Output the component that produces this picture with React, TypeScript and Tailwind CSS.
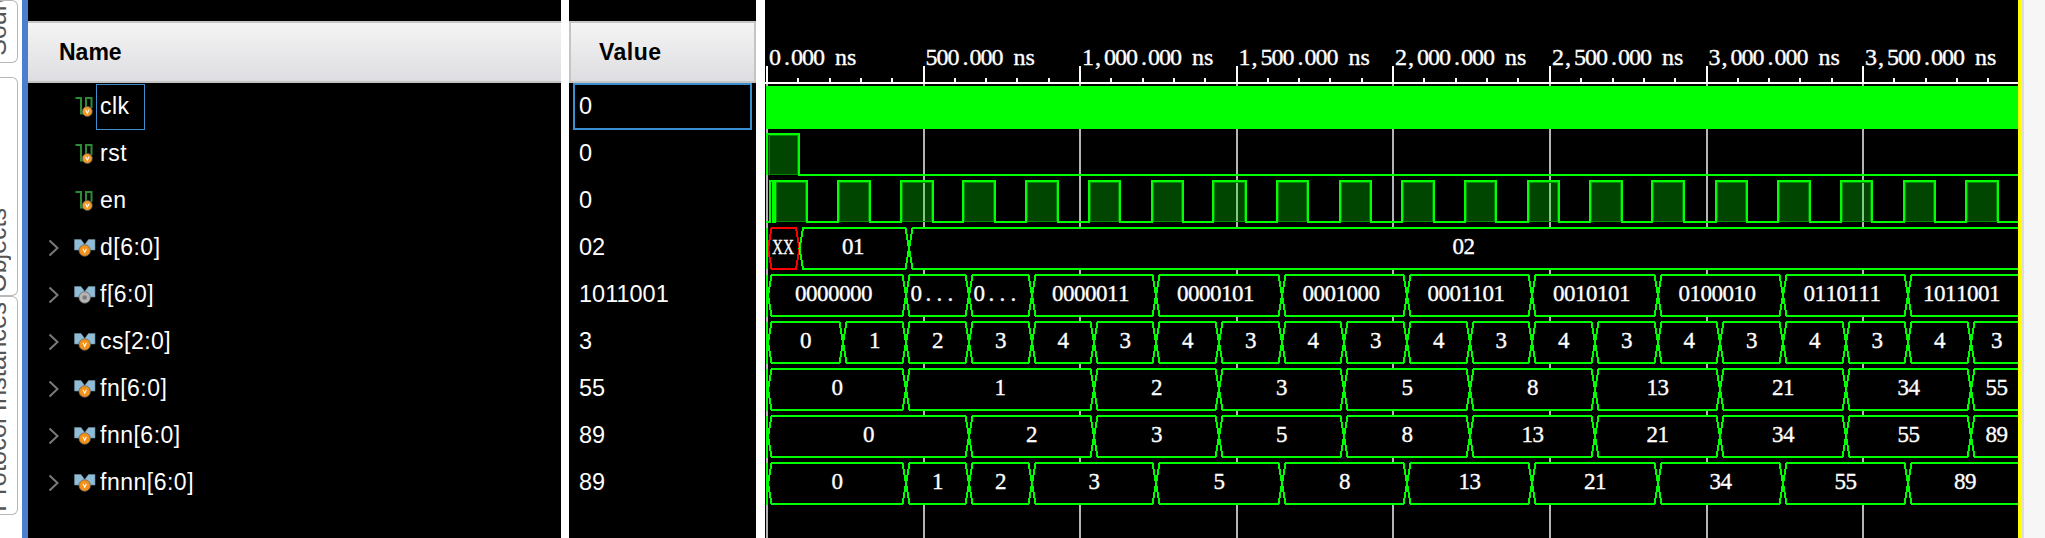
const TICKS = [767, 923.5, 1080, 1236.5, 1393, 1550, 1706.5, 1863];
const LABELS = ["0.000 ns", "500.000 ns", "1,000.000 ns", "1,500.000 ns", "2,000.000 ns", "2,500.000 ns", "3,000.000 ns", "3,500.000 ns"];
const PULSES: [number, number][] = [[775, 807], [838, 870], [901, 933], [963, 995], [1026, 1058], [1089, 1120], [1152, 1183], [1213, 1246], [1277, 1308], [1340, 1371], [1402, 1434], [1465, 1496], [1528, 1559], [1590, 1622], [1652, 1684], [1716, 1747], [1778, 1810], [1841, 1872], [1904, 1935], [1966, 1998]];
const END = 2022;
const BUSES: { top: number; cuts: number[]; vals: string[]; dx?: number }[] = [
  { top: 275, cuts: [768, 906, 969, 1032, 1156, 1282, 1407, 1532, 1658, 1783, 1908, END], vals: ["0000000", "0...", "0...", "0000011", "0000101", "0001000", "0001101", "0010101", "0100010", "0110111", "1011001"], dx: -3.5 },
  { top: 322, cuts: [768, 843, 906, 969, 1032, 1094, 1156, 1219, 1282, 1344, 1407, 1470, 1532, 1595, 1658, 1720, 1783, 1846, 1908, 1971, END], vals: ["0", "1", "2", "3", "4", "3", "4", "3", "4", "3", "4", "3", "4", "3", "4", "3", "4", "3", "4", "3"] },
  { top: 369, cuts: [768, 906, 1094, 1219, 1344, 1470, 1595, 1720, 1846, 1971, END], vals: ["0", "1", "2", "3", "5", "8", "13", "21", "34", "55"] },
  { top: 416, cuts: [768, 969, 1094, 1219, 1344, 1470, 1595, 1720, 1846, 1971, END], vals: ["0", "2", "3", "5", "8", "13", "21", "34", "55", "89"] },
  { top: 463, cuts: [768, 906, 969, 1032, 1156, 1282, 1407, 1532, 1658, 1783, 1908, END], vals: ["0", "1", "2", "3", "5", "8", "13", "21", "34", "55", "89"] },
];
const SIGNALS = [
  { name: "clk", value: "0", kind: "bit" },
  { name: "rst", value: "0", kind: "bit" },
  { name: "en", value: "0", kind: "bit" },
  { name: "d[6:0]", value: "02", kind: "vec" },
  { name: "f[6:0]", value: "1011001", kind: "vecGray" },
  { name: "cs[2:0]", value: "3", kind: "vec" },
  { name: "fn[6:0]", value: "55", kind: "vec" },
  { name: "fnn[6:0]", value: "89", kind: "vec" },
  { name: "fnnn[6:0]", value: "89", kind: "vec" },
];
const G = "#00ff00";

function Glyphs({ text, x, y, size = 23 }: { text: string; x: number; y: number; size?: number }) {
  const xs = text.split("").map((c, i) => x + i * 11 + (c === "." ? 4 : c === "," ? 2 : c === "s" ? 1 : 0));
  return (
    <text x={xs.join(" ")} y={y} fill="#fff" fontSize={size} fontFamily="'Liberation Serif', serif" stroke="#fff" strokeWidth="0.35" shapeRendering="auto">
      {text}
    </text>
  );
}

function Hex({ a, b, top, color = G }: { a: number; b: number; top: number; color?: string }) {
  const bot = top + 41;
  const mid = top + 20.5;
  return (
    <polygon
      points={`${a},${mid} ${a + 3.5},${top} ${b - 3.5},${top} ${b},${mid} ${b - 3.5},${bot} ${a + 3.5},${bot}`}
      fill="none"
      stroke={color}
      strokeWidth="2"
    />
  );
}

function Wave() {
  return (
    <svg width="1253" height="538" viewBox="765 0 1253 538" className="block shrink-0 bg-black" shapeRendering="crispEdges">
      {TICKS.map((x) => (
        <line key={x} x1={x} x2={x} y1="83" y2="538" stroke="#b4b4b4" strokeWidth="2" />
      ))}
      {TICKS.map((x) => (
        <g key={x}>
          <line x1={x} x2={x} y1="66" y2="83" stroke="#fff" strokeWidth="2" />
          {[1, 2, 3, 4].map((i) => (
            <line key={i} x1={x + i * 31.3} x2={x + i * 31.3} y1="78" y2="83" stroke="#fff" strokeWidth="2" />
          ))}
        </g>
      ))}
      <rect x="765" y="82" width="1253" height="2" fill="#fff" />
      {LABELS.map((l, i) => (
        <Glyphs key={l} text={l} x={TICKS[i] + 2} y={65} size={24} />
      ))}
      <rect x="766" y="86" width="1252" height="43" fill={G} />

      <rect x="768" y="134" width="31" height="41" fill="#00ff00" fillOpacity="0.27" />
      <rect x="769.5" y="135.5" width="28" height="39" fill="none" stroke="#008a00" strokeWidth="1" />
      <polyline points="767,175 767,134 799,134 799,175 2018,175" fill="none" stroke={G} strokeWidth="2" />

      {PULSES.map(([a, b]) => (
        <g key={a}>
          <rect x={a} y="181" width={b - a} height="41" fill="#00ff00" fillOpacity="0.27" />
          <rect x={a + 1.5} y="182.5" width={b - a - 3} height="39" fill="none" stroke="#008a00" strokeWidth="1" />
        </g>
      ))}
      <polyline
        points={`766,222 769.5,222 769.5,181 773,181 773,222 ${PULSES.map(([a, b]) => `${a},222 ${a},181 ${b},181 ${b},222`).join(" ")} 2018,222`}
        fill="none"
        stroke={G}
        strokeWidth="2"
      />

      <rect x="768" y="227" width="1250" height="43" fill="#000" />
      <Hex a={768} b={799.5} top={228} color="#ff0000" />
      <Hex a={799.5} b={909} top={228} />
      <Hex a={909} b={END} top={228} />
      <text x="783" y="254" fill="#fff" fontSize="22" fontFamily="'Liberation Serif', serif" textAnchor="middle" textLength="22" lengthAdjust="spacingAndGlyphs" stroke="#fff" strokeWidth="0.35">XX</text>
      <Glyphs text="01" x={842} y={254} />
      <Glyphs text="02" x={1452.5} y={254} />

      {BUSES.map((bus) => (
        <g key={bus.top}>
          <rect x="768" y={bus.top - 1} width="1250" height="43" fill="#000" />
          <rect x="766" y={bus.top} width="2" height="42" fill={G} />
          {bus.vals.map((v, i) => {
            const a = bus.cuts[i];
            const b = bus.cuts[i + 1];
            const center = (a + Math.min(b, 2022)) / 2 + (v === "0..." ? -5 : v.length === 7 ? (bus.dx ?? 0) : 0);
            return (
              <g key={i}>
                <Hex a={a} b={b} top={bus.top} />
                <Glyphs text={v} x={center - v.length * 5.5} y={bus.top + 26} />
              </g>
            );
          })}
        </g>
      ))}
      <rect x="766" y="228" width="2" height="41" fill={G} />
    </svg>
  );
}

function BitIcon() {
  return (
    <svg width="22" height="22" viewBox="0 0 22 22" className="shrink-0">
      <path d="M1.5 2H7V17.5H12V2H17.5V12" fill="none" stroke="#2c8c32" strokeWidth="2" />
      <circle cx="13.3" cy="15.5" r="5" fill="#f39a26" stroke="#555" strokeWidth="0.8" />
      <path d="M11.6 13.8L13.3 17.3L15 13.8" fill="none" stroke="#fff" strokeWidth="1.1" />
    </svg>
  );
}

function VecIcon({ gray }: { gray?: boolean }) {
  return (
    <svg width="22" height="22" viewBox="0 0 22 22" className="shrink-0">
      <path d="M0.5 2.5H7L10.7 7.5L14.5 2.5H21V13H15V10H6.5V13H0.5Z" fill="#8fbcd6" stroke="#6d8794" strokeWidth="0.6" />
      {gray ? (
        <>
          <circle cx="10.7" cy="13.5" r="5.7" fill="#b5b5b5" stroke="#666" strokeWidth="0.8" />
          <circle cx="10.7" cy="13.5" r="2.3" fill="#7a7a7a" />
        </>
      ) : (
        <>
          <circle cx="10.7" cy="13.5" r="5.7" fill="#f39118" stroke="#666" strokeWidth="0.8" />
          <path d="M9 11.8L10.7 15.3L12.4 11.8" fill="none" stroke="#fff" strokeWidth="1.1" />
        </>
      )}
    </svg>
  );
}

function Chevron() {
  return (
    <svg width="12" height="18" viewBox="0 0 12 18" className="shrink-0">
      <path d="M1.5 1.5L9.5 9L1.5 16.5" fill="none" stroke="#7a7a7a" strokeWidth="2" />
    </svg>
  );
}

function SideTab({ h, mt, label, pad, size }: { h: number; mt: number; label: string; pad: number; size: string }) {
  return (
    <div style={{ height: h, marginTop: mt }} className="relative w-[18px] overflow-hidden rounded-r-md border border-l-0 border-[#b8b8b8] bg-white">
      <span
        style={{ bottom: pad, fontSize: size }}
        className="absolute right-[8px] whitespace-nowrap leading-[24px] text-[#555] [writing-mode:vertical-rl] rotate-180"
      >
        {label}
      </span>
    </div>
  );
}

export default function App() {
  return (
    <div className="flex h-[538px] w-[2045px] overflow-hidden bg-white font-['Liberation_Sans',sans-serif] text-[23px] text-white">
      <div className="flex w-[22px] shrink-0 flex-col bg-white">
        <SideTab h={63} mt={0} label="Sources" pad={6} size="25px" />
        <SideTab h={219} mt={14} label="Objects" pad={2} size="25px" />
        <SideTab h={219} mt={0} label="Protocol Instances" pad={2} size="25.5px" />
      </div>
      <div className="w-[6px] shrink-0 bg-[#4a7fd0]" />

      <div className="flex w-[533px] shrink-0 flex-col bg-black pt-[21px]">
        <div className="flex h-[62px] items-center border-y-2 border-[#c4c4c4] bg-gradient-to-b from-[#f4f4f4] to-[#dedee2] pl-[31px] font-bold text-black">
          Name
        </div>
        {SIGNALS.map((s) => (
          <div key={s.name} className="flex h-[47px] items-center pl-[20px]">
            <div className="flex w-[26px] shrink-0">{s.kind !== "bit" && <Chevron />}</div>
            {s.kind === "bit" ? <BitIcon /> : <VecIcon gray={s.kind === "vecGray"} />}
            <span className={s.name === "clk" ? "flex h-[46px] w-[49px] items-center border border-[#3f8fd0] pl-[3px] tracking-[0.5px]" : "ml-[4px] tracking-[0.5px]"}>
              {s.name}
            </span>
          </div>
        ))}
      </div>

      <div className="w-[8px] shrink-0 bg-white" />

      <div className="flex w-[187px] shrink-0 flex-col bg-black pt-[21px]">
        <div className="flex h-[62px] items-center border-2 border-[#c4c4c4] bg-gradient-to-b from-[#f4f4f4] to-[#dedee2] pl-[28px] font-bold tracking-[0.5px] text-black">
          Value
        </div>
        {SIGNALS.map((s, i) => (
          <div key={s.name} className="flex h-[47px] items-center px-[4px] text-[23.5px]">
            <div className={i === 0 ? "flex h-[47px] w-full items-center border-2 border-[#3b8fcf] pl-[4px]" : "pl-[6px]"}>
              {s.value}
            </div>
          </div>
        ))}
      </div>

      <div className="w-[9px] shrink-0 bg-white" />
      <Wave />
      <div className="w-[4px] shrink-0 bg-[#ffff00]" />
      <div className="w-[2px] shrink-0 bg-[#dddddd]" />
      <div className="flex-1 bg-[#f6f6f6]" />
    </div>
  );
}
